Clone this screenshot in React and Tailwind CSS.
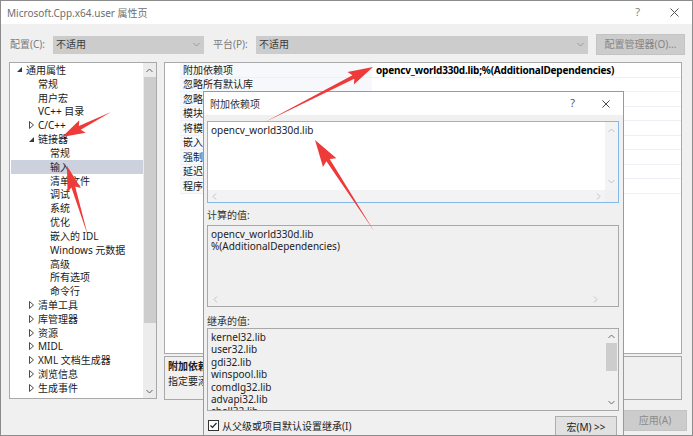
import React from "react";

const treeItems = [
  { t: "通用属性", lvl: 0, exp: "open" },
  { t: "常规", lvl: 1 },
  { t: "用户宏", lvl: 1 },
  { t: "VC++ 目录", lvl: 1 },
  { t: "C/C++", lvl: 1, exp: "closed" },
  { t: "链接器", lvl: 1, exp: "open" },
  { t: "常规", lvl: 2 },
  { t: "输入", lvl: 2, sel: true },
  { t: "清单文件", lvl: 2 },
  { t: "调试", lvl: 2 },
  { t: "系统", lvl: 2 },
  { t: "优化", lvl: 2 },
  { t: "嵌入的 IDL", lvl: 2 },
  { t: "Windows 元数据", lvl: 2 },
  { t: "高级", lvl: 2 },
  { t: "所有选项", lvl: 2 },
  { t: "命令行", lvl: 2 },
  { t: "清单工具", lvl: 1, exp: "closed" },
  { t: "库管理器", lvl: 1, exp: "closed" },
  { t: "资源", lvl: 1, exp: "closed" },
  { t: "MIDL", lvl: 1, exp: "closed" },
  { t: "XML 文档生成器", lvl: 1, exp: "closed" },
  { t: "浏览信息", lvl: 1, exp: "closed" },
  { t: "生成事件", lvl: 1, exp: "closed" },
];

const indent = ["pl-[6px]", "pl-[18px]", "pl-[30px]"];

const props = [
  "附加依赖项",
  "忽略所有默认库",
  "忽略特定默认库",
  "模块定义文件",
  "将模块添加到程序集",
  "嵌入托管资源文件",
  "强制符号引用",
  "延迟加载的 DLL",
  "程序集链接资源",
];

const inherited = [
  "kernel32.lib",
  "user32.lib",
  "gdi32.lib",
  "winspool.lib",
  "comdlg32.lib",
  "advapi32.lib",
  "shell32.lib",
];

function Chevron({ dir, className = "" }) {
  const vert = dir === "up" || dir === "down";
  const pts = {
    up: "0.5,4 3.5,1 6.5,4",
    down: "0.5,1 3.5,4 6.5,1",
    left: "4,0.5 1,3.5 4,6.5",
    right: "1,0.5 4,3.5 1,6.5",
  }[dir];
  return (
    <svg
      width={vert ? 7 : 5}
      height={vert ? 5 : 7}
      viewBox={vert ? "0 0 7 5" : "0 0 5 7"}
      className={className}
    >
      <polyline points={pts} fill="none" stroke="currentColor" strokeWidth="1" />
    </svg>
  );
}

function Expander({ kind }) {
  if (kind === "open")
    return (
      <svg width="5" height="5" viewBox="0 0 5 5">
        <polygon points="5,0 5,5 0,5" fill="#3a3a3a" />
      </svg>
    );
  return (
    <svg width="5" height="8" viewBox="0 0 5 8">
      <polygon points="0.5,0.5 4.5,4 0.5,7.5" fill="none" stroke="#4a4a4a" strokeWidth="1" />
    </svg>
  );
}

function Close({ size = 9, className = "" }) {
  return (
    <svg width={size} height={size} viewBox="0 0 9 9" className={className}>
      <path d="M0.5 0.5 L8.5 8.5 M8.5 0.5 L0.5 8.5" stroke="currentColor" strokeWidth="1" />
    </svg>
  );
}

// red annotation arrow, tapered shaft + barbed head
function Arrow({ x1, y1, x2, y2, head = 22, barb = 7, neck = 4 }) {
  const dx = x2 - x1;
  const dy = y2 - y1;
  const len = Math.hypot(dx, dy);
  const ux = dx / len;
  const uy = dy / len;
  const nx = -uy;
  const ny = ux;
  const bx = x2 - ux * head;
  const by = y2 - uy * head;
  const pts = [
    [x1, y1],
    [bx + (nx * neck) / 2, by + (ny * neck) / 2],
    [bx - ux * 3 + nx * barb, by - uy * 3 + ny * barb],
    [x2, y2],
    [bx - ux * 3 - nx * barb, by - uy * 3 - ny * barb],
    [bx - (nx * neck) / 2, by - (ny * neck) / 2],
  ]
    .map((p) => p.map((v) => v.toFixed(1)).join(","))
    .join(" ");
  return <polygon points={pts} fill="#ef3a3a" />;
}

export default function App() {
  return (
    <div className="w-[693px] h-[436px] relative overflow-hidden bg-[#f0f0f0] border border-[#8c8c8c] font-['Noto_Sans','Noto_Sans_CJK_SC',sans-serif] text-[10px] text-[#1a1a1a]">
      {/* title bar */}
      <div className="h-[23px] bg-white flex items-center pl-[6px] pr-[13px] text-[#6e6e6e]">
        <span className="leading-[12px]">Microsoft.Cpp.x64.user 属性页</span>
        <span className="ml-auto mr-[30px] text-[11px] text-[#808080]">?</span>
        <Close className="text-[#555]" />
      </div>

      {/* configuration row */}
      <div className="flex items-center h-[21px] mt-[10px] pl-[9px] pr-[7px]">
        <span className="w-[43px] text-[#7a7a7a]">配置(C):</span>
        <div className="w-[151px] h-[18px] bg-[#cccccc] flex items-center pl-[3px] pr-[4px] text-[#3c3c3c]">
          <span className="flex-1">不适用</span>
          <Chevron dir="down" className="text-[#9a9a9a]" />
        </div>
        <span className="ml-[9px] w-[43px] text-[#7a7a7a]">平台(P):</span>
        <div className="w-[332px] h-[18px] bg-[#cccccc] flex items-center pl-[3px] pr-[4px] text-[#3c3c3c]">
          <span className="flex-1">不适用</span>
          <Chevron dir="down" className="text-[#9a9a9a]" />
        </div>
        <div className="ml-auto w-[89px] h-[21px] bg-[#cccccc] border border-[#c4c4c4] flex items-center justify-center text-[#858585]">
          配置管理器(O)...
        </div>
      </div>

      {/* main area */}
      <div className="flex mt-[7px] pl-[8px]">
        {/* tree */}
        <div className="w-[148px] h-[337px] bg-white border border-[#a9a9a9] flex">
          <div className="flex-1 flex flex-col">
            {treeItems.map((it, i) => (
              <div
                key={i}
                className={`h-[13.83px] flex items-center ml-[1px] ${indent[it.lvl]} ${it.sel ? "bg-[#cdd1de]" : ""}`}
              >
                <span className="w-[9px] flex items-center">
                  {it.exp && <Expander kind={it.exp} />}
                </span>
                <span className="leading-[12px] whitespace-nowrap">{it.t}</span>
              </div>
            ))}
          </div>
          <div className="w-[13px] bg-[#ececec] flex flex-col items-center">
            <div className="h-[14px] flex items-center">
              <Chevron dir="up" className="text-[#606060]" />
            </div>
            <div className="w-[12px] h-[246px] bg-[#cdcdcd]" />
            <div className="flex-1 flex items-end pb-[4px]">
              <Chevron dir="down" className="text-[#606060]" />
            </div>
          </div>
        </div>

        {/* property grid + description */}
        <div className="ml-[7px] w-[518px] flex flex-col">
          <div className="h-[292px] bg-white border border-[#a9a9a9] flex flex-col">
            {props.map((p, i) => (
              <div key={i} className="h-[14.5px] flex">
                <div className="w-[15px]" />
                <div className="w-[192px] bg-[#f6f8fb] border-b border-[#edf0f4] pl-[3px] flex items-center whitespace-nowrap overflow-hidden">
                  <span className="leading-[12px]">{p}</span>
                </div>
                <div className="flex-1 border-b border-[#edf0f4] pl-[4px] flex items-center">
                  {i === 0 && (
                    <span className="leading-[12px] font-bold tracking-[-0.2px] text-black">
                      opencv_world330d.lib;%(AdditionalDependencies)
                    </span>
                  )}
                </div>
              </div>
            ))}
          </div>
          <div className="mt-[2px] h-[44px] bg-[#f0f0f0] border border-[#a9a9a9] pl-[3px] pt-[2px] leading-[15px]">
            <div className="font-bold">附加依赖项</div>
            <div>指定要添加到链接命令行的附加项。[例如 kernel32.lib]</div>
          </div>
        </div>
      </div>

      {/* bottom buttons */}
      <div className="flex justify-end mt-[10px] pr-[5px] gap-[8px]">
        <div className="w-[64px] h-[21px] bg-[#e1e1e1] border border-[#adadad] flex items-center justify-center">确定</div>
        <div className="w-[64px] h-[21px] bg-[#e1e1e1] border border-[#adadad] flex items-center justify-center">取消</div>
        <div className="w-[64px] h-[21px] bg-[#cccccc] border border-[#c4c4c4] flex items-center justify-center text-[#8a8a8a]">
          应用(A)
        </div>
      </div>

      {/* 附加依赖项 dialog */}
      <div className="absolute left-[202px] top-[90px] w-[421px] h-[360px] bg-[#f0f0f0] border border-[#9a9a9a] flex flex-col">
        <div className="h-[23px] bg-white flex items-center pl-[6px] pr-[13px] text-[#333]">
          <span className="leading-[12px]">附加依赖项</span>
          <span className="ml-auto mr-[27px] text-[11px] text-[#555]">?</span>
          <Close size={8} className="text-[#333]" />
        </div>
        <div className="flex flex-col pl-[3px] pr-[4px]">
          {/* edit box */}
          <div className="mt-[6px] h-[82px] bg-white border border-[#84b8ea] flex flex-col">
            <div className="flex-1 flex">
              <div className="flex-1 pl-[3px] pt-[2px] leading-[12px] text-[#222]">opencv_world330d.lib</div>
              <div className="w-[13px] bg-[#f3f3f3] flex flex-col items-center justify-between py-[6px] text-[#c2c2c2]">
                <Chevron dir="up" />
                <Chevron dir="down" />
              </div>
            </div>
            <div className="h-[12px] flex">
              <div className="flex-1 bg-[#f3f3f3] flex items-center justify-between px-[4px] text-[#c2c2c2]">
                <Chevron dir="left" />
                <Chevron dir="right" />
              </div>
              <div className="w-[13px] bg-[#f0f0f0]" />
            </div>
          </div>

          <div className="mt-[6px] leading-[12px] text-[#333]">计算的值:</div>
          <div className="mt-[4px] h-[82px] bg-[#f0f0f0] border border-[#a8a8a8] flex flex-col">
            <div className="flex-1 pl-[3px] pt-[2px] leading-[12px] text-[#222]">
              <div>opencv_world330d.lib</div>
              <div>%(AdditionalDependencies)</div>
            </div>
            <div className="h-[13px] flex items-center justify-between pl-[5px] pr-[20px] text-[#c2c2c2]">
              <Chevron dir="left" />
              <Chevron dir="right" />
            </div>
          </div>

          <div className="mt-[8px] leading-[12px] text-[#333]">继承的值:</div>
          <div className="mt-[1px] h-[83px] bg-[#f0f0f0] border border-[#a8a8a8] flex overflow-hidden">
            <div className="flex-1 pl-[3px] pt-[2px] leading-[12.4px] text-[#222] overflow-hidden">
              {inherited.map((l) => (
                <div key={l}>{l}</div>
              ))}
            </div>
            <div className="w-[14px] flex flex-col items-center text-[#6a6a6a]">
              <div className="h-[14px] flex items-center">
                <Chevron dir="up" />
              </div>
              <div className="w-[11px] h-[28px] bg-[#cdcdcd]" />
              <div className="flex-1 flex items-end pb-[5px]">
                <Chevron dir="down" />
              </div>
            </div>
          </div>

          <div className="flex items-start mt-[5px]">
            <div className="mt-[4px] ml-[1px] w-[11px] h-[11px] bg-white border border-[#333] flex items-center justify-center">
              <svg width="9" height="9" viewBox="0 0 9 9">
                <polyline points="1.5,4.5 3.5,6.5 7.5,2" fill="none" stroke="#222" strokeWidth="1.2" />
              </svg>
            </div>
            <span className="ml-[3px] mt-[4px] leading-[12px] text-[#222]">从父级或项目默认设置继承(I)</span>
            <div className="ml-auto mr-[2px] w-[62px] h-[23px] bg-[#e1e1e1] border border-[#adadad] flex items-center justify-center text-[#222]">
              宏(M) &gt;&gt;
            </div>
          </div>
        </div>
      </div>

      {/* annotation arrows */}
      <svg className="absolute left-[-1px] top-[-1px] w-[693px] h-[436px] pointer-events-none" viewBox="0 0 693 436">
        <Arrow x1={265} y1={122} x2={373} y2={67} />
        <Arrow x1={374} y1={231} x2={315} y2={140} head={24} barb={8} />
        <Arrow x1={111} y1={112} x2={62} y2={137} head={20} />
        <Arrow x1={88} y1={236} x2={67} y2={166} head={22} />
      </svg>
    </div>
  );
}
